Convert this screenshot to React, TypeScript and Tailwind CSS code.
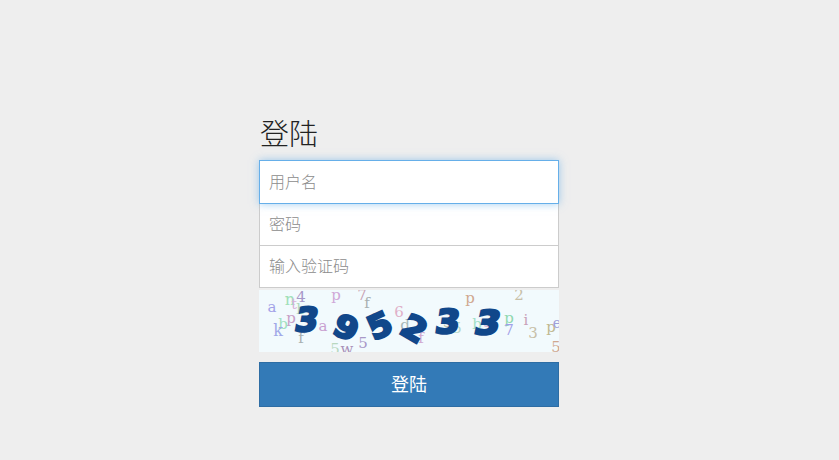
const noise: [string, number, number, string, number][] = [
  ["a", 272, 307, "#a3a3e8", 15],
  ["n", 290, 300, "#a0e0b8", 16],
  ["4", 301, 297, "#a898c8", 15],
  ["t", 294, 304, "#d8b0d8", 14],
  ["b", 301, 309, "#b0d8c0", 15],
  ["p", 291, 318, "#c8a0c8", 15],
  ["b", 283, 324, "#a0e0c0", 15],
  ["k", 278, 331, "#a0a8e8", 16],
  ["f", 301, 338, "#a8b0b0", 15],
  ["a", 323, 326, "#c8a0d0", 15],
  ["p", 336, 295, "#d0a8d8", 15],
  ["7", 362, 295, "#c8a0b0", 15],
  ["f", 367, 303, "#a8b0b0", 15],
  ["s", 375, 316, "#b0b8b8", 15],
  ["6", 399, 312, "#e0b0c8", 15],
  ["5", 335, 349, "#b8d8c0", 15],
  ["w", 347, 349, "#a890b8", 15],
  ["5", 363, 343, "#a898c8", 15],
  ["d", 405, 325, "#a8b8b8", 15],
  ["p", 421, 323, "#d8b0d8", 14],
  ["f", 421, 338, "#d0a8d0", 15],
  ["s", 447, 322, "#c0c0a8", 15],
  ["p", 470, 298, "#d0a890", 15],
  ["2", 519, 295, "#c8c0a8", 15],
  ["5", 457, 328, "#b8d8c8", 15],
  ["b", 477, 324, "#a0e0c8", 15],
  ["s", 487, 322, "#d8b0d8", 14],
  ["p", 509, 318, "#90d8b0", 15],
  ["7", 509, 330, "#a0a0e8", 15],
  ["i", 526, 320, "#c8a0b8", 15],
  ["3", 533, 333, "#c8c0a8", 15],
  ["p", 551, 327, "#c0b890", 15],
  ["e", 557, 323, "#a0a0d8", 14],
  ["5", 556, 347, "#d0a890", 15],
  ["-", 468, 353, "#c8a0c8", 14],
];

const digits: [string, number, number, string][] = [
  ["3", 307, 320, "skewX(-10deg) scale(1.05, 1.05)"],
  ["9", 346, 328, "rotate(24deg) scale(1.1, 1.0)"],
  ["5", 380, 326, "rotate(-24deg) scale(1.08, 1.05)"],
  ["2", 414, 329, "rotate(30deg) scale(1.1, 1.05)"],
  ["3", 448, 322, "skewX(-8deg) scale(1.12, 1.05)"],
  ["3", 488, 323, "skewX(-12deg) scale(1.15, 1.05)"],
];

const inputClass =
  "block w-full h-[43px] -mt-px px-[9px] bg-white border border-[#cccccc] text-base font-light text-[#333333] outline-none placeholder:text-[#8c8c8c] [font-family:'Liberation_Sans','Noto_Sans_CJK_SC',sans-serif]";

export default function App() {
  return (
    <div className="w-[839px] h-[460px] overflow-hidden bg-[#eeeeee] pt-[116px] pl-[259px] [font-family:'Liberation_Sans','Noto_Sans_CJK_SC',sans-serif]">
      <div className="w-[300px]">
        <h2 className="h-[44px] pl-px pt-px text-[29px] leading-[36px] font-light text-[#222222]">登陆</h2>
        <input
          placeholder="用户名"
          className={inputClass + " !mt-0 !h-11 pt-0.5 relative z-10 !border-[#66afe9] shadow-[0_0_8px_rgba(102,175,233,0.6)]"}
        />
        <input placeholder="密码" className={inputClass} />
        <input placeholder="输入验证码" className={inputClass} />
        <div className="relative mt-0.5 h-[62px] overflow-hidden bg-[#f2fafd]">
          {noise.map(([c, x, y, color, size], i) => (
            <span
              key={i}
              className="absolute leading-none [font-family:'DejaVu_Serif',serif]"
              style={{ left: x - 259, top: y - 290, color, fontSize: size, transform: "translate(-50%, -50%)" }}
            >
              {c}
            </span>
          ))}
          {digits.map(([c, x, y, t], i) => (
            <span
              key={i}
              className="absolute text-[31px] leading-none font-bold text-[#11478a] [font-family:'DejaVu_Sans',sans-serif] [-webkit-text-stroke:2.5px_#11478a]"
              style={{ left: x - 259, top: y - 290, transform: `translate(-50%, -50%) ${t}` }}
            >
              {c}
            </span>
          ))}
        </div>
        <button className="block w-full h-[45px] mt-2.5 bg-[#337ab7] border border-[#2e6da4] text-white text-lg">
          登陆
        </button>
      </div>
    </div>
  );
}
